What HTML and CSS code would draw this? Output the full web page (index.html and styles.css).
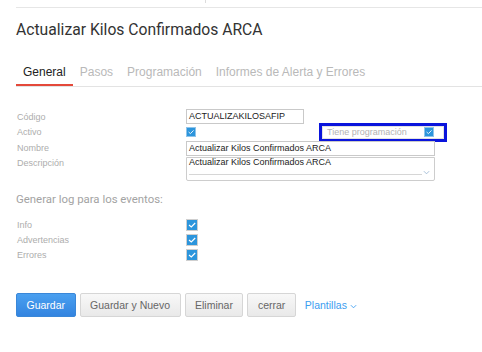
FILE: index.html
```html
<!DOCTYPE html>
<html lang="es">
<head>
  <meta charset="UTF-8">
  <title>Actualizar Kilos Confirmados ARCA</title>
  <link rel="stylesheet" href="styles.css">
</head>
<body>
  <div class="page">
    <div class="topbar"><div class="topbar-cell"></div></div>

    <h1 class="title">Actualizar Kilos Confirmados ARCA</h1>

    <div class="tabs">
      <span class="tab active">General</span>
      <span class="tab">Pasos</span>
      <span class="tab">Programación</span>
      <span class="tab">Informes de Alerta y Errores</span>
    </div>

    <div class="form">
      <label>Código</label>
      <div class="input code">ACTUALIZAKILOSAFIP</div>

      <label>Activo</label>
      <div class="check-row">
        <span class="check sm"><svg viewBox="0 0 10 10"><polyline points="2,5 4.3,7 8.2,3"/></svg></span>
        <div class="sched">
          <span>Tiene programación</span>
          <span class="check sm"><svg viewBox="0 0 10 10"><polyline points="2,5 4.3,7 8.2,3"/></svg></span>
        </div>
      </div>

      <label>Nombre</label>
      <div class="input wide">Actualizar Kilos Confirmados ARCA</div>

      <label class="top">Descripción</label>
      <div class="textarea">
        <div class="textarea-text">Actualizar Kilos Confirmados ARCA</div>
        <svg class="textarea-arrow" viewBox="0 0 8 5"><polyline points="1,1 4,4 7,1"/></svg>
      </div>
    </div>

    <h3 class="section">Generar log para los eventos:</h3>

    <div class="form events">
      <label>Info</label>
      <span class="check"><svg viewBox="0 0 10 10"><polyline points="2,5 4.3,7 8.2,3"/></svg></span>
      <label>Advertencias</label>
      <span class="check"><svg viewBox="0 0 10 10"><polyline points="2,5 4.3,7 8.2,3"/></svg></span>
      <label>Errores</label>
      <span class="check"><svg viewBox="0 0 10 10"><polyline points="2,5 4.3,7 8.2,3"/></svg></span>
    </div>

    <div class="actions">
      <button class="btn primary">Guardar</button>
      <button class="btn">Guardar y Nuevo</button>
      <button class="btn">Eliminar</button>
      <button class="btn">cerrar</button>
      <a class="link">Plantillas <svg viewBox="0 0 8 5"><polyline points="1,1 4,4 7,1"/></svg></a>
    </div>
  </div>
</body>
</html>
```

FILE: styles.css
```css
body {
  margin: 0;
  font-family: 'Liberation Sans', Arial, sans-serif;
  background: #fff;
  color: #333;
}

.page {
  padding-left: 16px;
}

.topbar {
  height: 7px;
  border-bottom: 1px solid #e6e6e6;
}

.topbar-cell {
  width: 189px;
  height: 3px;
  border-right: 1px solid #dcdcdc;
}

.title {
  margin: 12px 0 0;
  font-family: 'Roboto', sans-serif;
  font-size: 15.7px;
  font-weight: 400;
  line-height: 20px;
  color: #333;
}

.tabs {
  display: flex;
  margin-top: 25px;
  border-bottom: 1px solid #e3e3e3;
}

.tab {
  padding: 0 7px 5px;
  font-size: 12px;
  line-height: 14px;
  color: #b9b9b9;
  border-bottom: 2px solid transparent;
}

.tab.active {
  color: #222;
  border-bottom-color: #e4493a;
}

.form {
  display: grid;
  grid-template-columns: 170px auto;
  align-items: center;
  margin-top: 22px;
  font-size: 9px;
}

.form label {
  color: #adadad;
  padding-left: 1px;
}

.form label.top {
  align-self: start;
  padding-top: 2px;
}

.input {
  box-sizing: border-box;
  height: 15px;
  padding: 0 2px;
  border: 1px solid #c9c9c9;
  line-height: 13px;
  color: #222;
}

.input.code {
  width: 118px;
}

.input.wide {
  width: 249px;
  margin-top: 1px;
}

.check-row {
  display: flex;
  align-items: center;
  height: 16px;
}

.check {
  box-sizing: border-box;
  display: inline-flex;
  width: 12px;
  height: 12px;
  border: 1px solid #cfcfcf;
  background: #2c95dc;
}

.check.sm {
  width: 10px;
  height: 10px;
  border-color: #8fc4ea;
}

.check svg {
  width: 100%;
  height: 100%;
  fill: none;
  stroke: #fff;
  stroke-width: 1.1;
}

.sched {
  box-sizing: border-box;
  display: flex;
  align-items: center;
  justify-content: space-between;
  width: 122px;
  height: 13px;
  margin-left: 126px;
  padding: 0 9px 0 4px;
  border: 1px solid #e2e2e2;
  outline: 3px solid #0a14dc;
  color: #b3b3b3;
}

.textarea {
  box-sizing: border-box;
  display: flex;
  align-items: flex-end;
  width: 249px;
  height: 24px;
  margin-top: 1px;
  padding: 0 4px 5px 2px;
  border: 1px solid #cdcdcd;
  border-radius: 0 0 2px 2px;
  color: #222;
}

.textarea-text {
  flex: 1;
  height: 100%;
  line-height: 11px;
  border-bottom: 1px solid #d6d6d6;
}

.textarea-arrow {
  width: 7px;
  height: 5px;
  margin-left: 1px;
  fill: none;
  stroke: #9bb8d3;
  stroke-width: 1;
}

.section {
  margin: 11px 0 0;
  font-family: 'Roboto', sans-serif;
  font-size: 11.4px;
  font-weight: 400;
  line-height: 14px;
  color: #a3a3a3;
}

.events {
  grid-auto-rows: 15px;
  margin-top: 11px;
}

.actions {
  display: flex;
  align-items: center;
  gap: 4px;
  margin-top: 31px;
}

.btn {
  height: 24px;
  padding: 0 9.5px;
  font-family: 'Liberation Sans', Arial, sans-serif;
  font-size: 10.5px;
  color: #666;
  background: linear-gradient(#f8f8f8, #e9e9e9);
  border: 1px solid #d6d6d6;
  border-radius: 2px;
}

.btn.primary {
  color: #fff;
  background: linear-gradient(#4aa0f0, #3384e0);
  border-color: #3a87d8;
}

.link {
  margin-left: 5px;
  font-size: 10.5px;
  color: #3c9df0;
}

.link svg {
  width: 7px;
  height: 5px;
  fill: none;
  stroke: #3c9df0;
  stroke-width: 1;
}
```
